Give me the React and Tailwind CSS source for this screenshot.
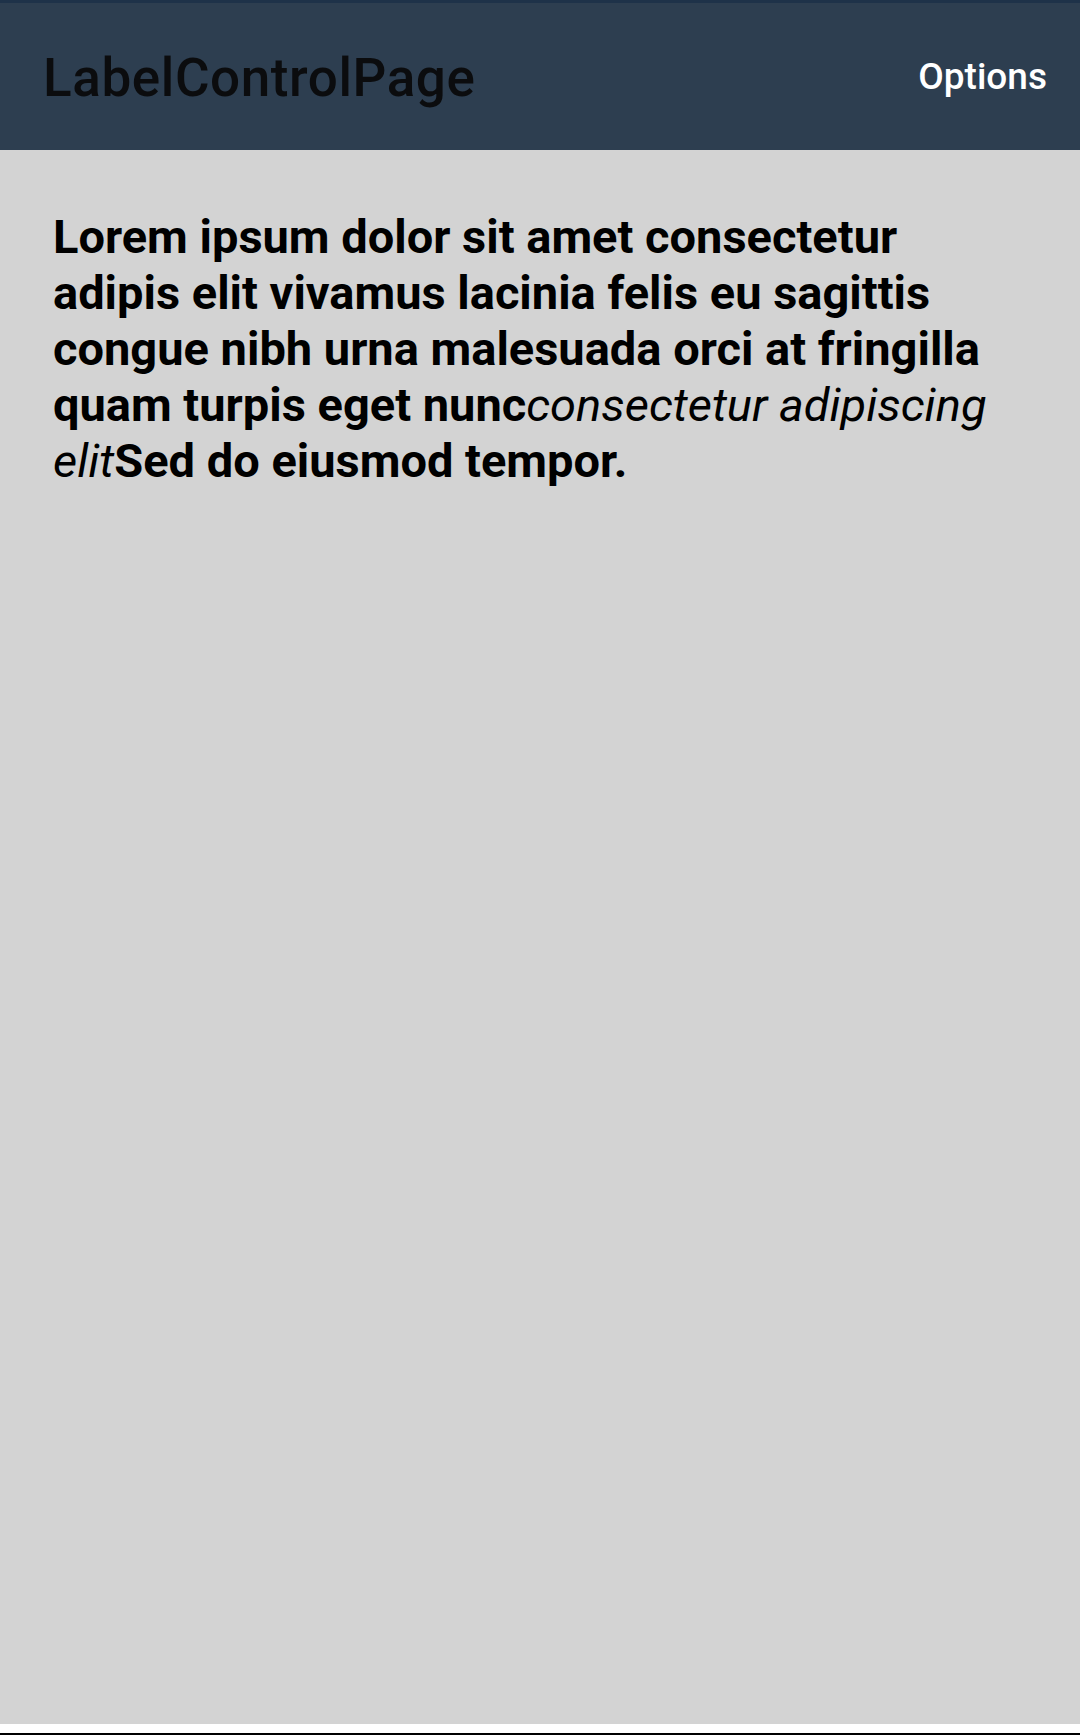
export default function App() {
  return (
    <div className="flex h-[1735px] w-full flex-col bg-white" style={{ fontFamily: 'Roboto, "Noto Sans", sans-serif' }}>
      <header className="flex h-[150px] shrink-0 items-center justify-between border-t-[3px] border-[#1e3249] bg-[#2d3e50] pl-[43px] pr-[33px]">
        <h1 className="pt-[3px] text-[53px] font-medium leading-none tracking-[0.6px] text-[#0b0c0e]">LabelControlPage</h1>
        <button className="text-[37px] font-medium leading-none text-white">Options</button>
      </header>
      <main className="flex-1 bg-[#d3d3d3] px-[53px] pt-[59px]">
        <p className="text-[47px] leading-[56px] text-black">
          <span className="font-bold">
            Lorem ipsum dolor sit amet consectetur adipis elit vivamus lacinia felis eu sagittis congue nibh urna malesuada orci at fringilla quam turpis eget nunc
          </span>
          <span className="italic">consectetur adipiscing elit</span>
          <span className="font-bold">Sed do eiusmod tempor.</span>
        </p>
      </main>
      <div className="h-[9px] shrink-0 bg-white" />
      <div className="h-[2px] shrink-0 bg-black" />
    </div>
  )
}
